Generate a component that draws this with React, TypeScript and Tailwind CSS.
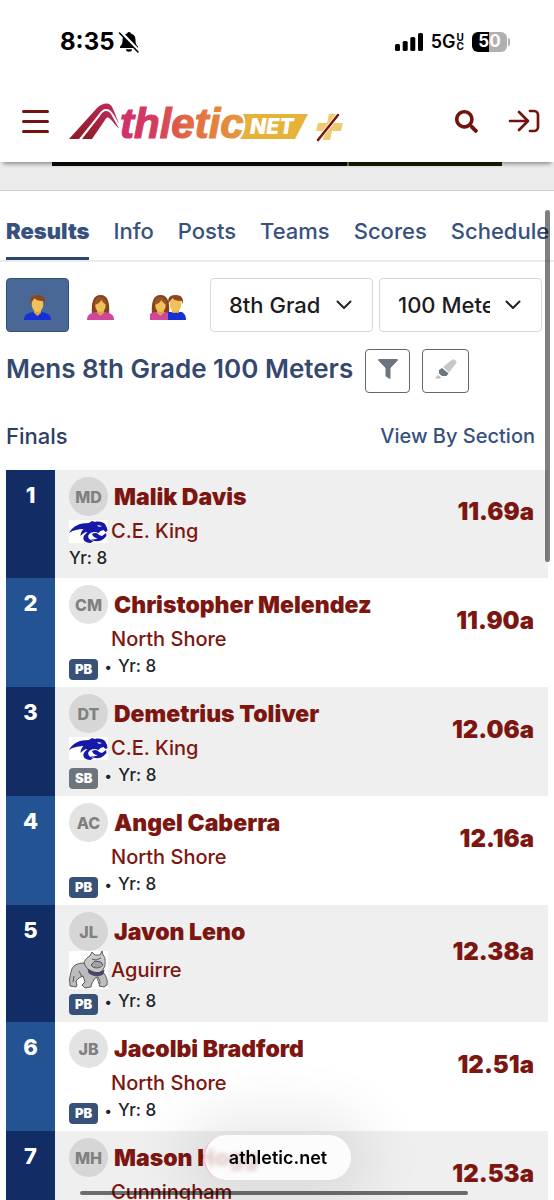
import { FaSearch } from "react-icons/fa";

type Athlete = {
  place: number;
  initials: string;
  name: string;
  team: string;
  logo?: "panther" | "bulldog";
  badge?: "PB" | "SB";
  mark: string;
};

const athletes: Athlete[] = [
  { place: 1, initials: "MD", name: "Malik Davis", team: "C.E. King", logo: "panther", mark: "11.69a" },
  { place: 2, initials: "CM", name: "Christopher Melendez", team: "North Shore", badge: "PB", mark: "11.90a" },
  { place: 3, initials: "DT", name: "Demetrius Toliver", team: "C.E. King", logo: "panther", badge: "SB", mark: "12.06a" },
  { place: 4, initials: "AC", name: "Angel Caberra", team: "North Shore", badge: "PB", mark: "12.16a" },
  { place: 5, initials: "JL", name: "Javon Leno", team: "Aguirre", logo: "bulldog", badge: "PB", mark: "12.38a" },
  { place: 6, initials: "JB", name: "Jacolbi Bradford", team: "North Shore", badge: "PB", mark: "12.51a" },
  { place: 7, initials: "MH", name: "Mason Hogg", team: "Cunningham", badge: "PB", mark: "12.53a" },
];

const tabs = ["Results", "Info", "Posts", "Teams", "Scores", "Schedule"];

function StatusBar() {
  return (
    <div className="flex h-20 items-center justify-between pt-1 pr-11 pl-[60px] text-black">
      <div className="flex items-center gap-1">
        <span className="text-2xl font-bold">8:35</span>
        <svg viewBox="0 0 22 22" className="h-[22px] w-[22px]" aria-label="Silent">
          <path d="M11 1a2 2 0 0 1 2 1.500c3 .8 4.500 3.200 4.500 6.500 0 4 1 5 2.500 6.500v1.500H2v-1.500C3.500 14 4.500 13 4.500 9c0-3.300 1.500-5.700 4.500-6.500A2 2 0 0 1 11 1zM8 18.300h6a3 2.500 0 0 1-6 0z" fill="currentColor" />
          <path d="M2.500.8 21 20" stroke="#fff" strokeWidth="3" />
          <path d="M1.500 2 20 21" stroke="currentColor" strokeWidth="1.600" strokeLinecap="round" />
        </svg>
      </div>
      <div className="flex items-center">
        <svg viewBox="0 0 28 18" className="mr-2 h-[18px] w-7" aria-label="Signal">
          <rect x="0" y="11" width="5" height="7" rx="1.500" />
          <rect x="7.700" y="8" width="5" height="10" rx="1.500" />
          <rect x="15.300" y="4" width="5" height="14" rx="1.500" />
          <rect x="23" y="0" width="5" height="18" rx="1.500" />
        </svg>
        <span className="text-lg font-semibold">5G</span>
        <span className="mr-2 ml-px flex flex-col text-[10px] leading-[9px] font-bold">
          <span>U</span>
          <span>C</span>
        </span>
        <span className="flex h-5 w-[35px] items-center justify-center rounded-md bg-linear-to-r from-black from-50% to-[#b0b0b0] to-50% text-[17px] font-bold text-white">
          50
        </span>
        <span className="ml-px h-2 w-0.5 rounded-r bg-[#b0b0b0]" />
      </div>
    </div>
  );
}

function Logo() {
  return (
    <svg viewBox="0 0 276 42" className="h-[42px] w-[276px]" role="img" aria-label="Athletic.net">
      <defs>
        <linearGradient id="word" gradientUnits="userSpaceOnUse" x1="50" y1="0" x2="174" y2="0">
          <stop offset="0" stopColor="#cf2f6d" />
          <stop offset=".3" stopColor="#d63c5c" />
          <stop offset=".55" stopColor="#e06a45" />
          <stop offset="1" stopColor="#e59a3a" />
        </linearGradient>
        <linearGradient id="peak" x1="0" y1="1" x2="1" y2="0">
          <stop offset="0" stopColor="#8b1a22" />
          <stop offset="1" stopColor="#c22a5c" />
        </linearGradient>
      </defs>
      <path d="M0 39 28 8c3-3 6-4.500 10-4.500 4 .5 5 3 7 7.500l5 13C46 17 43 9 37 9c-3 0-5 2-7 5L10 39z" fill="url(#peak)" />
      <path d="M13 39 31 16c3-5 7-7 11-2l8 14.500C46 25 43 20 40 18c-2-1-3 0-4 2L23 39z" fill="url(#peak)" />
      <text x="51" y="38" fontFamily="Liberation Sans, sans-serif" fontSize="42" fontWeight="700" fontStyle="italic" fill="url(#word)" stroke="url(#word)" strokeWidth="1.200">
        thletic
      </text>
      <path d="M174 14h65l-13 25h-55c6-8 7-17 3-25z" fill="#e5b33a" />
      <text x="181" y="34" fontFamily="Inter, sans-serif" fontSize="21" fontWeight="900" fontStyle="italic" fill="#fff">
        NET
      </text>
      <path d="M260 14h7l-2 9h9l-2 8h-9l-2 9h-7l2-9h-9l2-8h9z" fill="#efcb70" />
      <path d="M249 40 269 15" stroke="#fff" strokeWidth="4" />
      <path d="M249 40 269 15" stroke="#7b140f" strokeWidth="2.500" strokeLinecap="round" />
    </svg>
  );
}

function Header() {
  return (
    <header className="relative z-10 flex h-[82px] items-center justify-between pr-3.5 pl-[22px] text-[#74130d] shadow-[0_5px_4px_-3px_rgba(0,0,0,0.4)]">
      <div className="flex items-center gap-5">
        <button type="button" aria-label="Menu" className="flex w-[27px] flex-col gap-[7px]">
          <span className="h-[3px] rounded-full bg-current" />
          <span className="h-[3px] rounded-full bg-current" />
          <span className="h-[3px] rounded-full bg-current" />
        </button>
        <a href="#home">
          <Logo />
        </a>
      </div>
      <div className="flex items-center gap-[30px]">
        <button type="button" aria-label="Search">
          <FaSearch size={23} />
        </button>
        <button type="button" aria-label="Log in">
          <svg viewBox="0 0 32 24" className="h-6 w-8" fill="none" stroke="currentColor" strokeWidth="2.700" strokeLinecap="round" strokeLinejoin="round">
            <path d="M2 12h18M11 3l9 9-9 9M22 2h4a4 4 0 0 1 4 4v12a4 4 0 0 1-4 4h-4" />
          </svg>
        </button>
      </div>
    </header>
  );
}

function Man() {
  return (
    <g>
      <path d="M0 26c0-5 3-7 9-8h9c6 1 9 3 9 8z" fill="#1431d8" />
      <path d="M10 15h7v4l-3.500 3-3.500-3z" fill="#dba243" />
      <ellipse cx="13.500" cy="10.500" rx="5.800" ry="7.500" fill="#efc05c" />
      <path d="M6.500 10C5 3 9 .5 14 1c6 0 8 4 6.500 9l-1-3c-5 0-8-1-9-3-1 2-3 3-4 6z" fill="#8a481b" />
    </g>
  );
}

function Woman() {
  return (
    <g>
      <path d="M5 20C4 9 6 1 13.500 1S23 9 22 20z" fill="#874318" />
      <path d="M0 26c0-5 3-7 9-8h9c6 1 9 3 9 8z" fill="#cf469b" />
      <path d="M10 14h7v5l-3.500 3-3.500-3z" fill="#dba243" />
      <ellipse cx="13.500" cy="11" rx="5.300" ry="7" fill="#efc05c" />
      <path d="M7.500 11c0-6 2-8 6-8s6 3 6 8c-2-1-4-3-5-5-2 3-4 4-7 5z" fill="#9a5423" />
    </g>
  );
}

function Panther() {
  return (
    <svg viewBox="0 0 39 23" className="w-[39px] bg-white" aria-hidden="true">
      <path d="M0 13C4 6 10 3 20 3l3-2 3 1c4-1 8 0 10 2l2 4 .5 3-2 1-2-2-3 1-2 2c-4-2-8-1-10 2-1 3 1 5 5 6l-3 2c-6 0-9-4-6-8l3-3c-3 0-5 2-7 4 0-3 1-5 3-7-5 0-10 1-14.500 4z" fill="#1518a8" />
      <path d="M23 14c3-2 6-1 7 1l3 1 4-3 .5 3-3 3c-4 3-9 3-13 0 3 1 6 0 7-1-3 0-5-2-5.500-4z" fill="#1518a8" />
      <path d="m28 5 5 1-3 1z" fill="#fff" />
    </svg>
  );
}

function Bulldog() {
  return (
    <svg viewBox="0 0 39 38" className="w-[39px] bg-white" aria-hidden="true" stroke="#3c3c40" strokeWidth=".8" strokeLinejoin="round">
      <path d="M2 21C3 14 9 12 15 12l8 6 10 2c4 4 6 9 5 14l-3 2-5-1 1-4-2-5-3 1-3 5-1 4-6 1-3-3 3-3-2-6-4 2-3 3 1 4-1 2-6-1-.500-7z" fill="#bcbcbf" />
      <path d="M15 12c1-3 3-6 6-7l2-4 3 3h5l2-4 1 4c3 3 2 7 2 11l-3 5c-4 3-9 3-13-1-2-2-4-4-5-7z" fill="#c8c8cb" />
      <path d="M19 18c5 4 12 5 16 1l-1 4c-4 3-10 2-14-1z" fill="#51417c" />
      <path d="M22 14c3 4 8 4 12 0l-2-3-6-1z" fill="#a1a1a6" />
      <path d="m23 8 4 1 5-2M10 20l3 6M28 27l2 6M5 25l-1 6" fill="none" />
      <path d="m24 14 1 2 1-2m5 0 1 2 1-2" fill="#fff" strokeWidth=".4" />
    </svg>
  );
}

function GenderFilter() {
  return (
    <div className="flex shrink-0">
      <button type="button" aria-label="Mens" className="flex h-[54px] w-[63px] items-center justify-center rounded border border-[#34507f] bg-[#4a6895] pt-1">
        <svg viewBox="0 0 27 26" className="h-[26px] w-[27px]"><Man /></svg>
      </button>
      <button type="button" aria-label="Womens" className="flex h-[54px] w-[63px] items-center justify-center pt-1">
        <svg viewBox="0 0 27 26" className="h-[26px] w-[27px]"><Woman /></svg>
      </button>
      <button type="button" aria-label="Mixed" className="flex h-[54px] w-[72px] items-center justify-center pt-1">
        <svg viewBox="0 0 36 26" className="h-[26px] w-9">
          <svg x="-3" width="27" height="26"><Woman /></svg>
          <path d="M18 26v-8h13c3 1 5 3 5 8z" fill="#1431d8" />
          <svg x="12" width="24" height="19"><Man /></svg>
        </svg>
      </button>
    </div>
  );
}

function FilterSelect({ label, value }: { label: string; value: string }) {
  return (
    <label className="relative min-w-0 flex-1">
      <span className="sr-only">{label}</span>
      <select className="h-[54px] w-full appearance-none rounded border border-[#d6d8dc] bg-white pr-[51px] pl-[18px] text-[22px] font-medium text-[#1c1c1e]">
        <option>{value}</option>
      </select>
      <svg viewBox="0 0 16 10" className="pointer-events-none absolute top-[22px] right-[21px] h-[10px] w-4" fill="none" stroke="#222" strokeWidth="2" strokeLinecap="round" strokeLinejoin="round">
        <path d="m1.500 1.500 6.500 6.500 6.500-6.500" />
      </svg>
    </label>
  );
}

function ResultRow({ athlete }: { athlete: Athlete }) {
  return (
    <tr className="group align-top odd:bg-[#efefef]">
      <th scope="row" className="w-[49px] bg-[#245394] pt-[9px] text-[22px] leading-8 font-extrabold text-white group-odd:bg-[#122d66]">
        {athlete.place}
      </th>
      <td className="pt-[7px] pb-[7px] pl-3.5">
        <div className="flex items-center gap-1.5">
          <span className="flex size-[39px] shrink-0 items-center justify-center rounded-full bg-[#e3e3e3] text-base font-extrabold text-[#808080] group-odd:bg-[#d6d6d6]">
            {athlete.initials}
          </span>
          <a href="#athlete" className="text-[23px] leading-8 font-black whitespace-nowrap text-[#7d1610]">
            {athlete.name}
          </a>
        </div>
        <div className="flex min-h-[30px] items-center gap-[3px]">
          <span className="w-[39px] shrink-0">
            {athlete.logo === "panther" && <Panther />}
            {athlete.logo === "bulldog" && <Bulldog />}
          </span>
          <a href="#team" className="text-xl leading-[30px] font-medium text-[#7d1610]">
            {athlete.team}
          </a>
        </div>
        <div className="flex items-start gap-1.5 text-[17px] leading-[25px] text-[#212529]">
          {athlete.badge && (
            <>
              <span className={`mt-[5px] rounded px-1.5 text-[13px] leading-[21px] font-black text-white ${athlete.badge === "PB" ? "bg-[#385179]" : "bg-[#6c747c]"}`}>
                {athlete.badge}
              </span>
              <span className="text-sm leading-[25px]">•</span>
            </>
          )}
          <span className="font-medium">Yr: 8</span>
        </div>
      </td>
      <td className="pr-3.5 pb-6 text-right align-middle">
        <a href="#mark" className="text-2xl font-black text-[#7d1610]">{athlete.mark}</a>
      </td>
    </tr>
  );
}

export default function App() {
  return (
    <div className="relative h-screen overflow-hidden bg-white font-[Inter,sans-serif]">
      <StatusBar />
      <Header />

      <div className="h-[29px] border-b border-[#cfcfcf] bg-[#ebebeb] px-[52px]">
        <div className="flex h-1 bg-[#0c0d06]">
          <span className="w-[66%] border-r-2 border-[#7d8034]" />
          <span className="flex-1 bg-[#1b1e05]" />
        </div>
      </div>

      <nav className="flex h-[71px] gap-6 overflow-hidden border-b-2 border-[#ececec] px-1.5 text-[22px] text-[#37517e]">
        {tabs.map((tab, idx) => (
          <a
            key={tab}
            href={`#${tab.toLowerCase()}`}
            className={idx === 0 ? "border-b-[3px] border-[#2c4672] pt-6 font-black" : "pt-6 font-medium"}
          >
            {tab}
          </a>
        ))}
      </nav>

      <main className="px-1.5">
        <div className="flex gap-1.5 pt-4 pr-1.5">
          <GenderFilter />
          <FilterSelect label="Grade" value="8th Grade" />
          <FilterSelect label="Event" value="100 Meters" />
        </div>

        <div className="flex items-center gap-3 pt-[17px]">
          <h1 className="pb-1 text-[26px] leading-9 font-semibold whitespace-nowrap text-[#34496d]">Mens 8th Grade 100 Meters</h1>
          <button type="button" aria-label="Filter" className="flex h-11 w-[45px] shrink-0 items-center justify-center rounded border border-[#5f6870] pb-1">
            <svg viewBox="0 0 20 20" className="size-5">
              <path d="M1 0h18c1 0 1 1 .5 1.800L12.500 9v10c0 1-1 1-1.500.5L8 17.500c-.5-.5-.5-.5-.5-1V9L.5 1.800C0 1 0 0 1 0z" fill="#6c757d" />
            </svg>
          </button>
          <button type="button" aria-label="Highlight" className="flex h-11 w-[47px] shrink-0 items-center justify-center rounded border border-[#5f6870] pb-1">
            <svg viewBox="0 0 22 20" className="h-5 w-[22px]">
              <path d="M8 8 17 .8c1-.8 2-.8 3 .2l.8.800c1 1 1 2 0 3L14 13.500z" fill="#c4c8cb" />
              <path d="m7 9 6.500 5.500-2 2.500H7L4 14.500V11z" fill="#6c757d" />
              <path d="m3 16 3 2.500-1 1H0z" fill="#b8bcc0" />
            </svg>
          </button>
        </div>

        <div className="flex items-center justify-between pt-7 pr-[13px] pb-[19px]">
          <h2 className="text-[22px] leading-[30px] font-medium text-[#2c4064]">Finals</h2>
          <a href="#sections" className="text-xl leading-[30px] font-medium text-[#37517e]">View By Section</a>
        </div>

        <table className="w-full">
          <tbody>
            {athletes.map((athlete) => (
              <ResultRow key={athlete.place} athlete={athlete} />
            ))}
          </tbody>
        </table>
      </main>

      {/* Browser chrome floating over the page */}
      <div className="absolute top-[210px] right-1 h-[352px] w-[5px] rounded-full bg-black/50" />
      <div className="absolute inset-x-0 bottom-5 flex justify-center">
        <div className="rounded-full border-l-2 border-[#f6c4c4] bg-white/80 px-6 text-lg leading-[45px] font-semibold text-black shadow-[0_0_60px_20px_rgba(0,0,0,0.09)] backdrop-blur-[2px]">
          athletic.net
        </div>
      </div>
      <div className="absolute bottom-[5px] left-20 h-1 w-[70%] rounded-full bg-black/55" />
    </div>
  );
}
